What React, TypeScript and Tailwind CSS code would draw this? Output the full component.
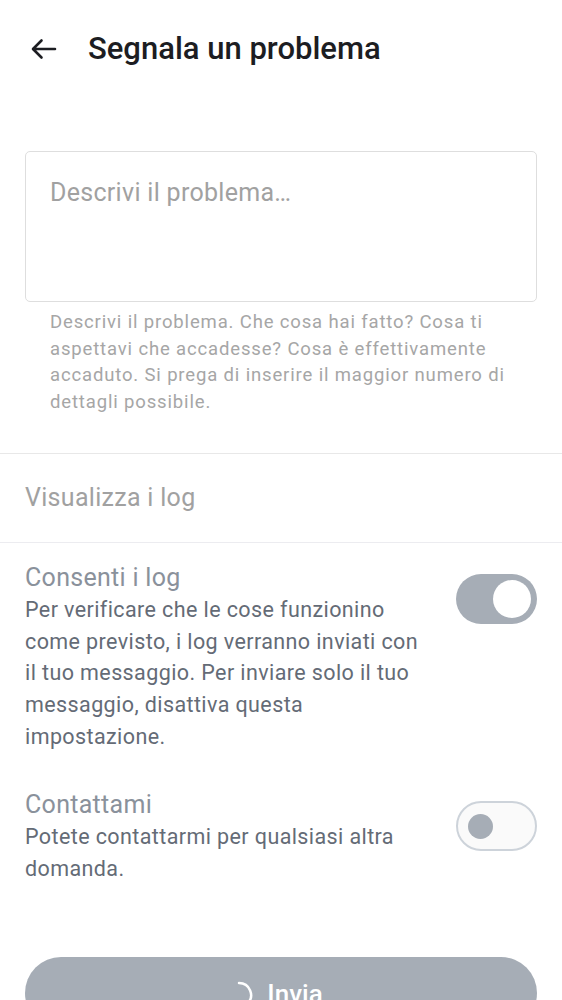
const font = { fontFamily: "Roboto, 'Noto Sans', sans-serif" };

const Toggle = ({ on }: { on: boolean }) =>
  on ? (
    <div className="flex h-[50px] w-[81px] shrink-0 items-center justify-end rounded-full bg-[#a6adb6] pr-[6px]">
      <div className="h-[38px] w-[38px] rounded-full bg-white" />
    </div>
  ) : (
    <div className="flex h-[50px] w-[81px] shrink-0 items-center rounded-full border-2 border-[#cdd3da] bg-[#fafafa] pl-[10px]">
      <div className="h-[25px] w-[25px] rounded-full bg-[#a6adb6]" />
    </div>
  );

const Setting = ({ title, desc, on }: { title: string; desc: string; on: boolean }) => (
  <div className="flex gap-[26px] px-[25px]">
    <div className="flex-1">
      <div className="text-[25px] leading-[32px] tracking-[0.3px] text-[#8a919b]">{title}</div>
      <p className="text-[21.5px] leading-[31.7px] tracking-[0.4px] text-[#646b76]">{desc}</p>
    </div>
    <div className="pt-[12px]">
      <Toggle on={on} />
    </div>
  </div>
);

export default function App() {
  return (
    <div className="h-[1000px] w-[562px] overflow-hidden bg-white" style={font}>
      <header className="flex h-[98px] items-center pl-[31px]">
        <svg width="26" height="22" viewBox="0 0 26 22" fill="none" stroke="#1c1d22" strokeWidth="2.6" strokeLinecap="round" strokeLinejoin="round">
          <path d="M24 11H2.5M10.5 2.5 2 11l8.5 8.5" />
        </svg>
        <h1 className="ml-[31px] text-[31px] font-medium text-[#1c1d22]">Segnala un problema</h1>
      </header>

      <div className="px-[25px] pt-[53px]">
        <div className="h-[151px] rounded-[5px] border border-[#dedede] px-[24px] pt-[26px]">
          <div className="text-[25px] leading-[30px] tracking-[0.3px] text-[#a1a1a1]">Descrivi il problema…</div>
        </div>
        <p className="mt-[7px] px-[25px] text-[18.5px] leading-[26.7px] tracking-[0.85px] text-[#a6a6a6]">
          Descrivi il problema. Che cosa hai fatto? Cosa ti aspettavi che accadesse? Cosa è effettivamente
          accaduto. Si prega di inserire il maggior numero di dettagli possibile.
        </p>
      </div>

      <div className="mt-[37px] border-t border-[#e8e8e8]" />
      <div className="flex h-[88px] items-center px-[25px] text-[25px] tracking-[0.3px] text-[#a1a1a1]">
        Visualizza i log
      </div>
      <div className="border-t border-[#ececf0]" />

      <div className="flex flex-col gap-[37px] pt-[19px]">
        <Setting
          on
          title="Consenti i log"
          desc="Per verificare che le cose funzionino come previsto, i log verranno inviati con il tuo messaggio. Per inviare solo il tuo messaggio, disattiva questa impostazione."
        />
        <Setting on={false} title="Contattami" desc="Potete contattarmi per qualsiasi altra domanda." />
      </div>

      <div className="px-[25px] pt-[72px]">
        <button className="flex h-[72px] w-full items-start justify-center gap-[14px] rounded-[36px] bg-[#a6adb6] pr-[14px] pt-[22px] text-[26px] font-medium leading-[30px] text-white">
          <svg width="28" height="28" viewBox="0 0 28 28" fill="none" className="mt-[2px]">
            <path d="M14 2a12 12 0 0 1 8.5 20.5" stroke="white" strokeWidth="2.5" strokeLinecap="round" />
          </svg>
          <span>Invia</span>
        </button>
      </div>
    </div>
  );
}
